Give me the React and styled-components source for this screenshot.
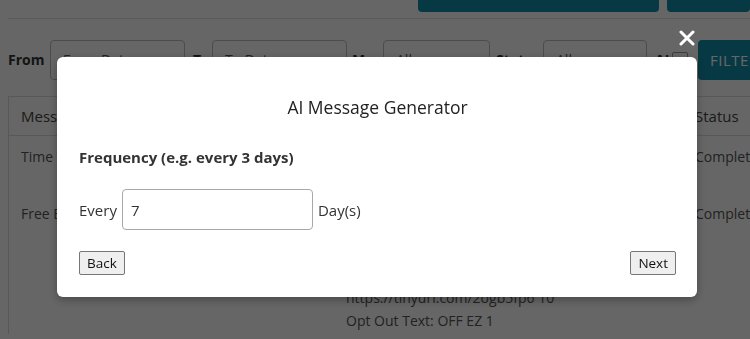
import React from 'react';
import styled, { createGlobalStyle } from 'styled-components';

const GlobalStyle = createGlobalStyle`
    html, body {
        margin: 0;
        padding: 0;
        width: 750px;
        height: 339px;
        overflow: hidden;
        background: #ffffff;
        font-family: "Open Sans", "Liberation Sans", sans-serif;
        color: #333333;
    }
`;

const Page = styled.div`
    padding: 0 0 0 8px;
    margin-top: -30px;
`;

const Header = styled.div`
    display: flex;
    align-items: flex-end;
    justify-content: space-between;
    height: 48px;
    border-bottom: 1px solid #e2e2e2;
`;

const PageTitle = styled.h1`
    margin: 0 0 15px 0;
    font-size: 30px;
    font-weight: 600;
    letter-spacing: 1px;
    color: #118fab;
    line-height: 1;
`;

const HeaderActions = styled.div`
    display: flex;
    gap: 8px;
    align-self: stretch;
    padding-bottom: 6px;
`;

const TealButton = styled.div`
    width: ${p => p.$w}px;
    background: #118fab;
    border-radius: 0 0 4px 4px;
`;

const FilterBar = styled.div`
    display: flex;
    align-items: center;
    margin-top: 20px;
    height: 41px;
`;

const FilterLabel = styled.span`
    box-sizing: border-box;
    font-size: 14px;
    font-weight: 700;
    color: #333;
    width: ${p => p.$w}px;
    padding-left: ${p => p.$pl || 0}px;
    flex-shrink: 0;
    overflow: hidden;
    white-space: nowrap;
`;

const FilterInput = styled.div`
    width: ${p => p.$w}px;
    height: 40px;
    box-sizing: border-box;
    border: 1px solid #bdbdbd;
    border-radius: 4px;
    padding: 9px 12px;
    font-size: 14px;
    color: #555;
    flex-shrink: 0;
`;

const CheckBox = styled.div`
    width: 16px;
    height: 16px;
    box-sizing: border-box;
    border: 1px solid #999;
    border-radius: 2px;
    margin-right: 10px;
    flex-shrink: 0;
`;

const FilterButton = styled.div`
    flex: 1;
    height: 40px;
    background: #118fab;
    border-radius: 4px 0 0 4px;
    color: #ffffff;
    font-size: 15px;
    display: flex;
    align-items: center;
    padding-left: 12px;
    letter-spacing: 0.5px;
    overflow: hidden;
    white-space: nowrap;
`;

const Table = styled.div`
    margin-top: 16px;
    border-left: 1px solid #dcdcdc;
    border-top: 1px solid #dcdcdc;
    font-size: 14px;
    color: #555;
`;

const HeadRow = styled.div`
    display: grid;
    grid-template-columns: 325px 349px 1fr;
    height: 38px;
    align-items: center;
    border-bottom: 1px solid #dcdcdc;
    & > span { padding-left: 12px; font-size: 15px; color: #444; white-space: nowrap; }
`;

const BodyRow = styled.div`
    display: grid;
    grid-template-columns: 325px 349px 1fr;
    padding-top: ${p => p.$pt}px;
    height: ${p => p.$h}px;
    box-sizing: border-box;
    & > span { padding-left: 12px; line-height: 23px; white-space: nowrap; }
`;

const ContentCell = styled.span`
    padding-top: ${p => p.$pt}px;
`;

const Overlay = styled.div`
    position: fixed;
    inset: 0;
    background: rgba(0, 0, 0, 0.6);
`;

const CloseIcon = styled.div`
    position: fixed;
    left: 679px;
    top: 29px;
    width: 16px;
    height: 16px;
`;

const Modal = styled.div`
    position: fixed;
    left: 57px;
    top: 57px;
    width: 640px;
    height: 240px;
    box-sizing: border-box;
    background: #ffffff;
    border-radius: 6px;
    padding: 38px 21px 22px 22px;
    display: flex;
    flex-direction: column;
    box-shadow: 0 3px 10px rgba(0, 0, 0, 0.3);
`;

const ModalTitle = styled.h2`
    margin: 0;
    text-align: center;
    font-size: 17.5px;
    font-weight: 400;
    color: #222;
    line-height: 24px;
`;

const FieldLabel = styled.div`
    margin-top: 28px;
    font-size: 15px;
    font-weight: 700;
    color: #333;
    line-height: 20px;
`;

const FieldRow = styled.div`
    display: flex;
    align-items: center;
    margin-top: 22px;
    gap: 5px;
    font-size: 15px;
    color: #333;
`;

const NumberInput = styled.input`
    width: 191px;
    height: 41px;
    box-sizing: border-box;
    border: 1px solid #a8a8a8;
    border-radius: 4px;
    padding: 0 8px;
    font-family: inherit;
    font-size: 15px;
    color: #333;
    outline: none;
`;

const Actions = styled.div`
    margin-top: auto;
    display: flex;
    justify-content: space-between;
`;

const NavButton = styled.button`
    height: 24px;
    padding: 0 7px;
    font-family: inherit;
    font-size: 13.5px;
    color: #111;
    background: #efefef;
    border: 1px solid #767676;
    border-radius: 2px;
`;

export default function App() {
    return (
        <>
            <GlobalStyle />
            <Page>
                <Header>
                    <PageTitle>MANAGE MESSAGES</PageTitle>
                    <HeaderActions>
                        <TealButton $w={241} />
                        <TealButton $w={83} />
                    </HeaderActions>
                </Header>
                <FilterBar>
                    <FilterLabel $w={42}>From</FilterLabel>
                    <FilterInput $w={135}>From Date</FilterInput>
                    <FilterLabel $w={27} $pl={8}>To</FilterLabel>
                    <FilterInput $w={135}>To Date</FilterInput>
                    <FilterLabel $w={36} $pl={5}>Msg</FilterLabel>
                    <FilterInput $w={107}>All</FilterInput>
                    <FilterLabel $w={53} $pl={6}>Status</FilterLabel>
                    <FilterInput $w={104}>All</FilterInput>
                    <FilterLabel $w={25} $pl={8}>AI</FilterLabel>
                    <CheckBox />
                    <FilterButton>FILTER</FilterButton>
                </FilterBar>
                <Table>
                    <HeadRow>
                        <span>Message</span>
                        <span>Content</span>
                        <span>Status</span>
                    </HeadRow>
                    <BodyRow $pt={9} $h={58}>
                        <span>Time To Save</span>
                        <span></span>
                        <span>Completed</span>
                    </BodyRow>
                    <BodyRow $pt={8} $h={140}>
                        <span>Free Bonus</span>
                        <ContentCell $pt={84}>
                            https://tinyurl.com/2ogb5fp6 10<br />Opt Out Text: OFF EZ 1
                        </ContentCell>
                        <span>Completed</span>
                    </BodyRow>
                </Table>
            </Page>
            <Overlay />
            <CloseIcon>
                <svg width="16" height="16" viewBox="0 0 16 16">
                    <path d="M2 2 L14 14 M14 2 L2 14" stroke="#fff" strokeWidth="3" strokeLinecap="round" />
                </svg>
            </CloseIcon>
            <Modal>
                <ModalTitle>AI Message Generator</ModalTitle>
                <FieldLabel>Frequency (e.g. every 3 days)</FieldLabel>
                <FieldRow>
                    <span>Every</span>
                    <NumberInput defaultValue="7" />
                    <span>Day(s)</span>
                </FieldRow>
                <Actions>
                    <NavButton>Back</NavButton>
                    <NavButton>Next</NavButton>
                </Actions>
            </Modal>
        </>
    );
}
